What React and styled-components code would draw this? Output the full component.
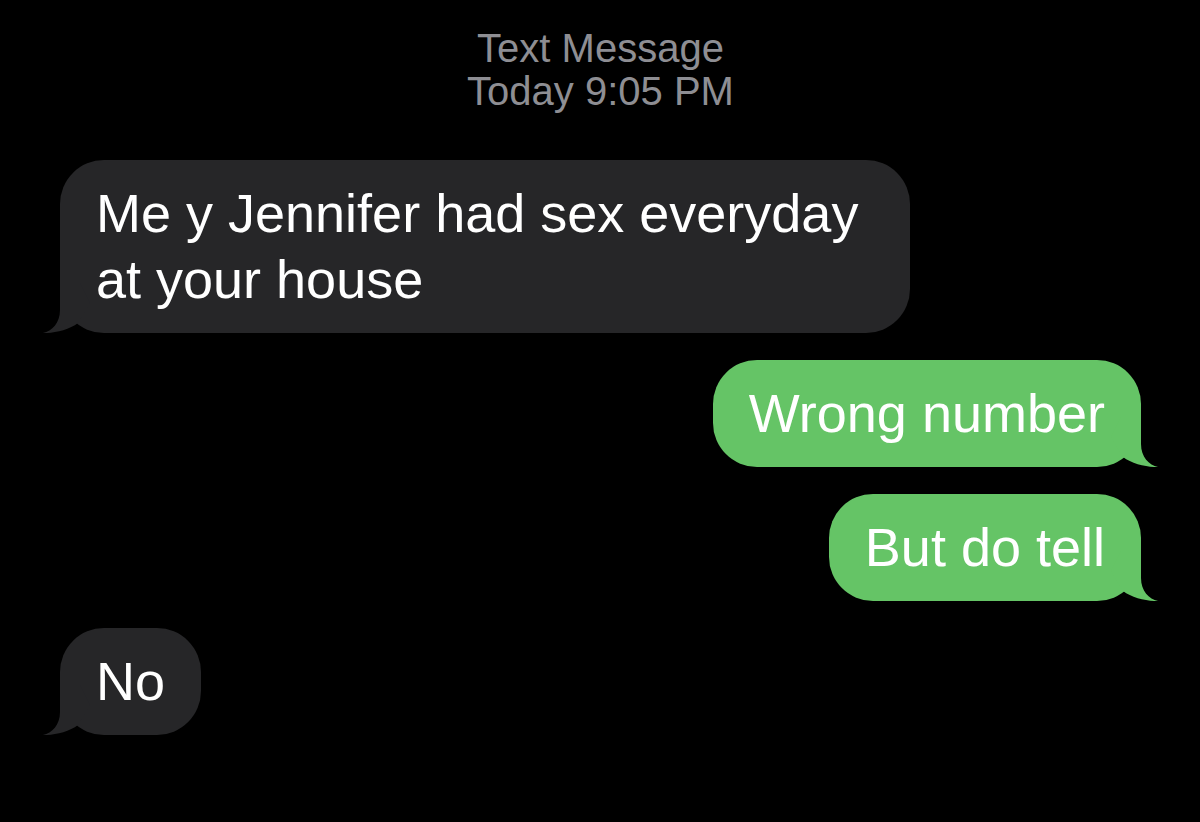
import React from "react";
import styled, { createGlobalStyle } from "styled-components";

const Global = createGlobalStyle`
  html, body {
    margin: 0;
    padding: 0;
    background: #000;
  }
  body {
    font-family: "Liberation Sans", Arial, sans-serif;
    -webkit-font-smoothing: antialiased;
  }
`;

const Screen = styled.div`
  width: 1200px;
  height: 822px;
  background: #000;
  overflow: hidden;
  display: flex;
  flex-direction: column;
  box-sizing: border-box;
  padding: 27px 59px 0 60px;
`;

const Header = styled.div`
  display: flex;
  flex-direction: column;
  align-items: center;
  color: #8e8e93;
  font-size: 40px;
  line-height: 43px;
  margin-bottom: 47px;
`;

const Thread = styled.div`
  display: flex;
  flex-direction: column;
  gap: 27px;
`;

const Bubble = styled.div`
  position: relative;
  align-self: ${(p) => (p.$me ? "flex-end" : "flex-start")};
  width: fit-content;
  max-width: 850px;
  box-sizing: border-box;
  padding: 20px 36px 21px;
  border-radius: 44px;
  background: ${(p) => (p.$me ? "#65c466" : "#262628")};
  color: #fff;
  font-size: 54px;
  line-height: 66px;
`;

const TailSvg = styled.svg`
  position: absolute;
  bottom: 0;
  width: 65px;
  height: 50px;
  ${(p) =>
    p.$me
      ? "right: -20px; transform: scaleX(-1);"
      : "left: -20px;"}
`;

const Tail = ({ me, color }) => (
  <TailSvg $me={me} viewBox="-20 -50 65 50" aria-hidden="true">
    <path
      d="M0 -50 L0 -23 C0 -10 -8 -2 -17 0 C-7 0.5 9 -3 18 -10 L30 -30 L20 -50 Z"
      fill={color}
    />
  </TailSvg>
);

const Message = ({ me, children }) => (
  <Bubble $me={me}>
    {children}
    <Tail me={me} color={me ? "#65c466" : "#262628"} />
  </Bubble>
);

export default function App() {
  return (
    <>
      <Global />
      <Screen>
        <Header>
          <span>Text Message</span>
          <span>Today 9:05 PM</span>
        </Header>
        <Thread>
          <Message>Me y Jennifer had sex everyday at your house</Message>
          <Message me>Wrong number</Message>
          <Message me>But do tell</Message>
          <Message>No</Message>
        </Thread>
      </Screen>
    </>
  );
}
